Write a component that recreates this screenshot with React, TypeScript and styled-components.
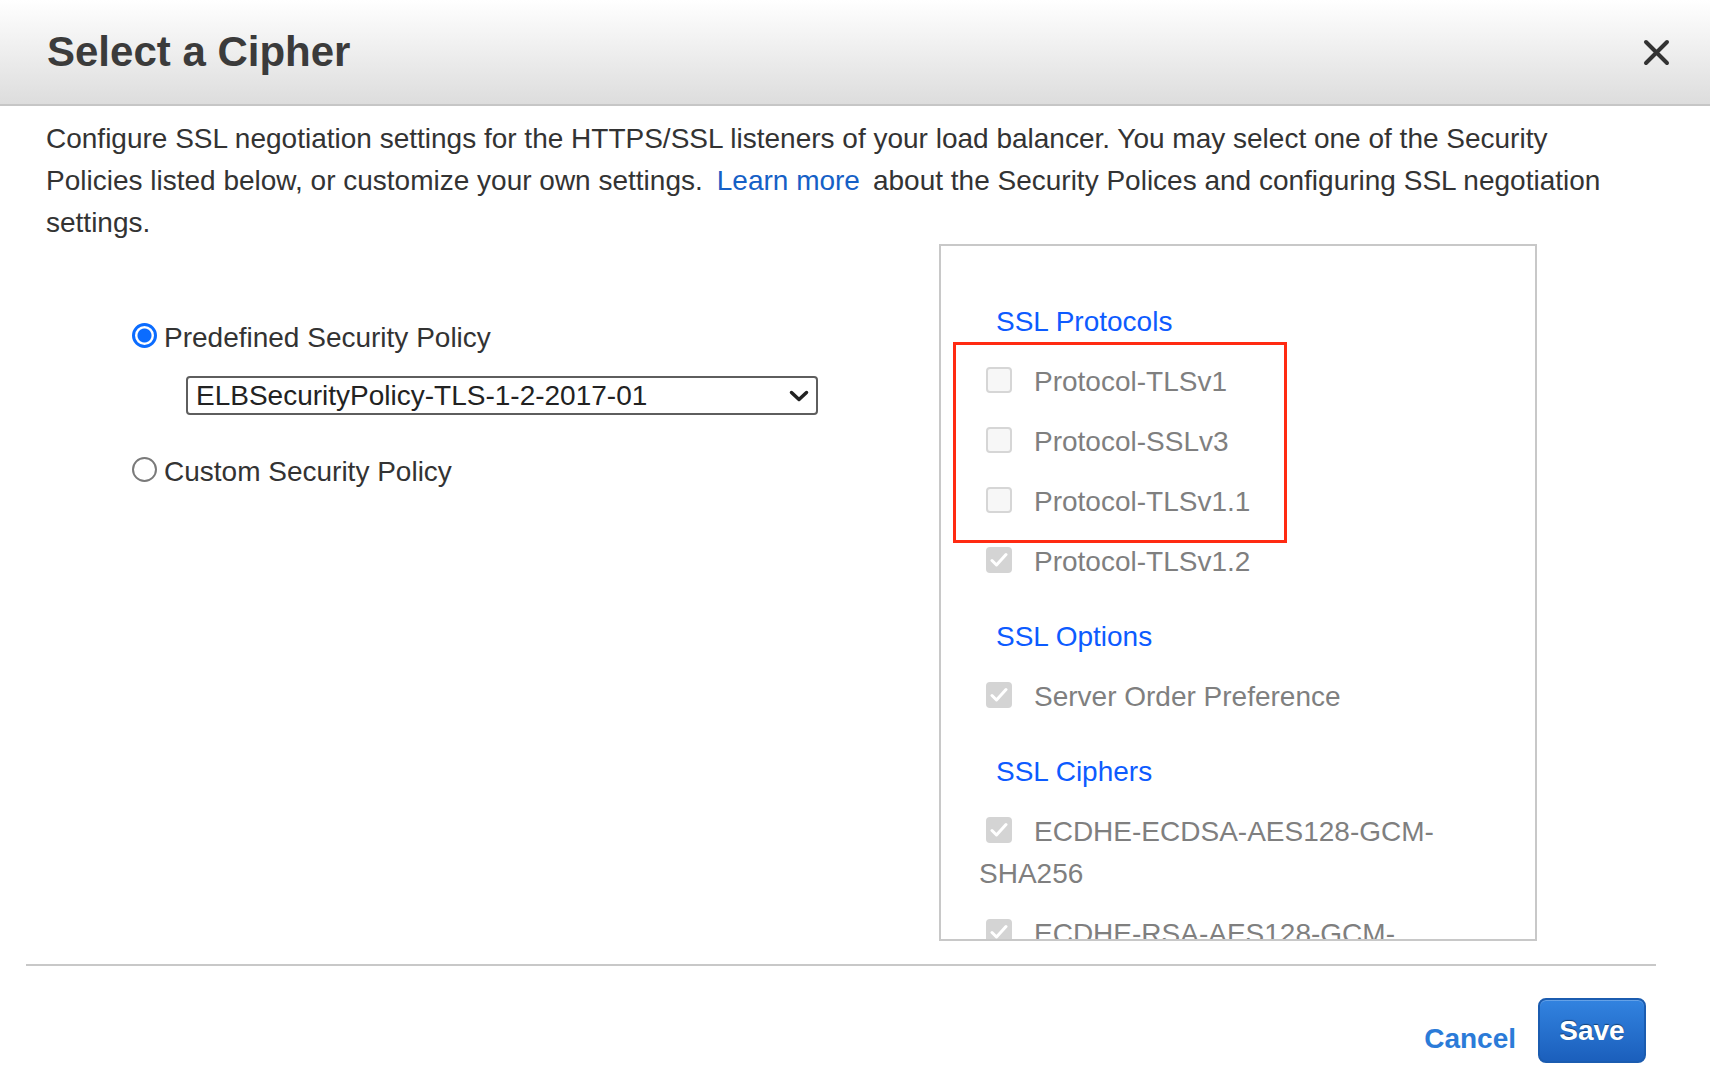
import React from "react";
import styled, { createGlobalStyle } from "styled-components";

const GlobalStyle = createGlobalStyle`
  body {
    margin: 0;
    background: #ffffff;
    font-family: "Liberation Sans", Arial, Helvetica, sans-serif;
  }
`;

const Modal = styled.div`
  width: 1710px;
  height: 1090px;
  background: #ffffff;
  overflow: hidden;
`;

const Header = styled.div`
  height: 106px;
  box-sizing: border-box;
  display: flex;
  align-items: flex-start;
  justify-content: space-between;
  padding: 31px 40px 0 47px;
  background: linear-gradient(#ffffff, #dddddd);
  border-bottom: 2px solid #c6c6c6;
`;

const Title = styled.h1`
  margin: 0;
  font-size: 42px;
  line-height: 42px;
  font-weight: bold;
  color: #3b3b3b;
`;

const Close = styled.button`
  margin-top: 8px;
  width: 27px;
  height: 27px;
  padding: 0;
  border: none;
  background: none;
  cursor: pointer;
  display: flex;
`;

const Body = styled.div`
  padding: 12px 46px 0 46px;
`;

const Intro = styled.p`
  margin: 0;
  max-width: 1595px;
  font-size: 28px;
  line-height: 42px;
  color: #333333;
`;

const Link = styled.a`
  color: #1560c6;
  text-decoration: none;
  padding: 0 13px 0 14px;
`;

const Columns = styled.div`
  display: flex;
`;

const Left = styled.div`
  width: 893px;
  padding: 73px 0 0 86px;
  box-sizing: border-box;
`;

const RadioRow = styled.label<{ $gap?: number }>`
  display: flex;
  align-items: center;
  gap: 7px;
  margin-top: ${(p) => p.$gap ?? 0}px;
  font-size: 28px;
  line-height: 42px;
  color: #333333;
`;

const Radio = styled.span<{ $on?: boolean }>`
  width: 25px;
  height: 25px;
  box-sizing: border-box;
  margin-top: -5px;
  border-radius: 50%;
  flex: none;
  border: ${(p) => (p.$on ? "3px solid #0b6cff" : "2px solid #7a7a7a")};
  background: ${(p) =>
    p.$on ? "radial-gradient(circle, #0b6cff 0 6.5px, #ffffff 7.5px)" : "#ffffff"};
`;

const SelectWrap = styled.div`
  position: relative;
  width: 632px;
  height: 39px;
  margin: 17px 0 0 54px;
`;

const Select = styled.select`
  width: 100%;
  height: 100%;
  box-sizing: border-box;
  appearance: none;
  border: 2px solid #5e5e5e;
  border-radius: 4px;
  background: #ffffff;
  padding: 0 0 0 8px;
  font-family: inherit;
  font-size: 28px;
  color: #222222;
`;

const Chevron = styled.svg`
  position: absolute;
  right: 9px;
  top: 14px;
  pointer-events: none;
`;

const Panel = styled.div`
  width: 598px;
  height: 697px;
  box-sizing: border-box;
  border: 2px solid #c8c8c8;
  overflow: hidden;
  padding: 55px 0 0 38px;
`;

const Section = styled.div`
  & + & {
    margin-top: 33px;
  }
`;

const Heading = styled.div`
  margin: 0 0 18px 17px;
  font-size: 28px;
  line-height: 42px;
  color: #0d5bff;
`;

const Group = styled.div`
  position: relative;
`;

const Highlight = styled.div`
  position: absolute;
  left: -26px;
  top: -19px;
  width: 334px;
  height: 201px;
  box-sizing: border-box;
  border: 3px solid #ff2a12;
  pointer-events: none;
`;

const Item = styled.div`
  margin-bottom: 18px;
  font-size: 28px;
  line-height: 42px;
  color: #7f7f7f;
  padding-right: 60px;
`;

const Box = styled.span<{ $checked?: boolean }>`
  display: inline-flex;
  align-items: center;
  justify-content: center;
  vertical-align: top;
  width: 26px;
  height: 26px;
  box-sizing: border-box;
  margin: 6px 22px 0 7px;
  border-radius: 4px;
  border: ${(p) => (p.$checked ? "none" : "2px solid #d6d6d6")};
  background: ${(p) => (p.$checked ? "#d4d4d4" : "#f7f7f7")};
`;

const Footer = styled.div`
  margin: 23px 54px 0 26px;
  border-top: 2px solid #c8c8c8;
  display: flex;
  justify-content: flex-end;
  align-items: flex-start;
  padding: 32px 10px 0 0;
  gap: 22px;
`;

const Cancel = styled.button`
  margin-top: 20px;
  padding: 0;
  border: none;
  background: none;
  font-family: inherit;
  font-size: 28px;
  line-height: 42px;
  font-weight: bold;
  color: #2b7bd8;
  cursor: pointer;
`;

const Save = styled.button`
  width: 108px;
  height: 65px;
  border-radius: 8px;
  border: 2px solid #1b5cb0;
  background: linear-gradient(#3283e0, #1b5fbc);
  box-shadow: inset 0 1px 0 rgba(255, 255, 255, 0.25);
  font-family: inherit;
  font-size: 28px;
  font-weight: bold;
  color: #ffffff;
  text-shadow: 0 -1px 1px rgba(0, 0, 0, 0.45);
  cursor: pointer;
`;

function Check({ checked }: { checked?: boolean }) {
  return (
    <Box $checked={checked}>
      {checked && (
        <svg width="18" height="16" viewBox="0 0 18 16">
          <polyline
            points="2,8.5 6.5,13 16,2.5"
            fill="none"
            stroke="#ffffff"
            strokeWidth="3"
            strokeLinecap="round"
            strokeLinejoin="round"
          />
        </svg>
      )}
    </Box>
  );
}

const protocols = ["Protocol-TLSv1", "Protocol-SSLv3", "Protocol-TLSv1.1"];
const ciphers = ["ECDHE-ECDSA-AES128-GCM-SHA256", "ECDHE-RSA-AES128-GCM-SHA256"];

function App() {
  return (
    <Modal>
      <GlobalStyle />
      <Header>
        <Title>Select a Cipher</Title>
        <Close aria-label="Close">
          <svg width="27" height="27" viewBox="0 0 27 27">
            <path
              d="M3 3 L24 24 M24 3 L3 24"
              stroke="#333333"
              strokeWidth="4"
              strokeLinecap="round"
            />
          </svg>
        </Close>
      </Header>
      <Body>
        <Intro>
          Configure SSL negotiation settings for the HTTPS/SSL listeners of your load
          balancer. You may select one of the Security Policies listed below, or
          customize your own settings.<Link href="#">Learn more</Link>about the
          Security Polices and configuring SSL negotiation settings.
        </Intro>
        <Columns>
          <Left>
            <RadioRow>
              <Radio $on />
              Predefined Security Policy
            </RadioRow>
            <SelectWrap>
              <Select defaultValue="ELBSecurityPolicy-TLS-1-2-2017-01">
                <option>ELBSecurityPolicy-TLS-1-2-2017-01</option>
              </Select>
              <Chevron width="20" height="12" viewBox="0 0 20 12">
                <polyline
                  points="2.5,2.5 10,9.5 17.5,2.5"
                  fill="none"
                  stroke="#222222"
                  strokeWidth="3.5"
                  strokeLinecap="round"
                  strokeLinejoin="round"
                />
              </Chevron>
            </SelectWrap>
            <RadioRow $gap={36}>
              <Radio />
              Custom Security Policy
            </RadioRow>
          </Left>
          <Panel>
            <Section>
              <Heading>SSL Protocols</Heading>
              <Group>
                <Highlight />
                {protocols.map((p) => (
                  <Item key={p}>
                    <Check />
                    {p}
                  </Item>
                ))}
              </Group>
              <Item>
                <Check checked />
                Protocol-TLSv1.2
              </Item>
            </Section>
            <Section>
              <Heading>SSL Options</Heading>
              <Item>
                <Check checked />
                Server Order Preference
              </Item>
            </Section>
            <Section>
              <Heading>SSL Ciphers</Heading>
              {ciphers.map((c) => (
                <Item key={c}>
                  <Check checked />
                  {c}
                </Item>
              ))}
            </Section>
          </Panel>
        </Columns>
      </Body>
      <Footer>
        <Cancel>Cancel</Cancel>
        <Save>Save</Save>
      </Footer>
    </Modal>
  );
}

export default App;
